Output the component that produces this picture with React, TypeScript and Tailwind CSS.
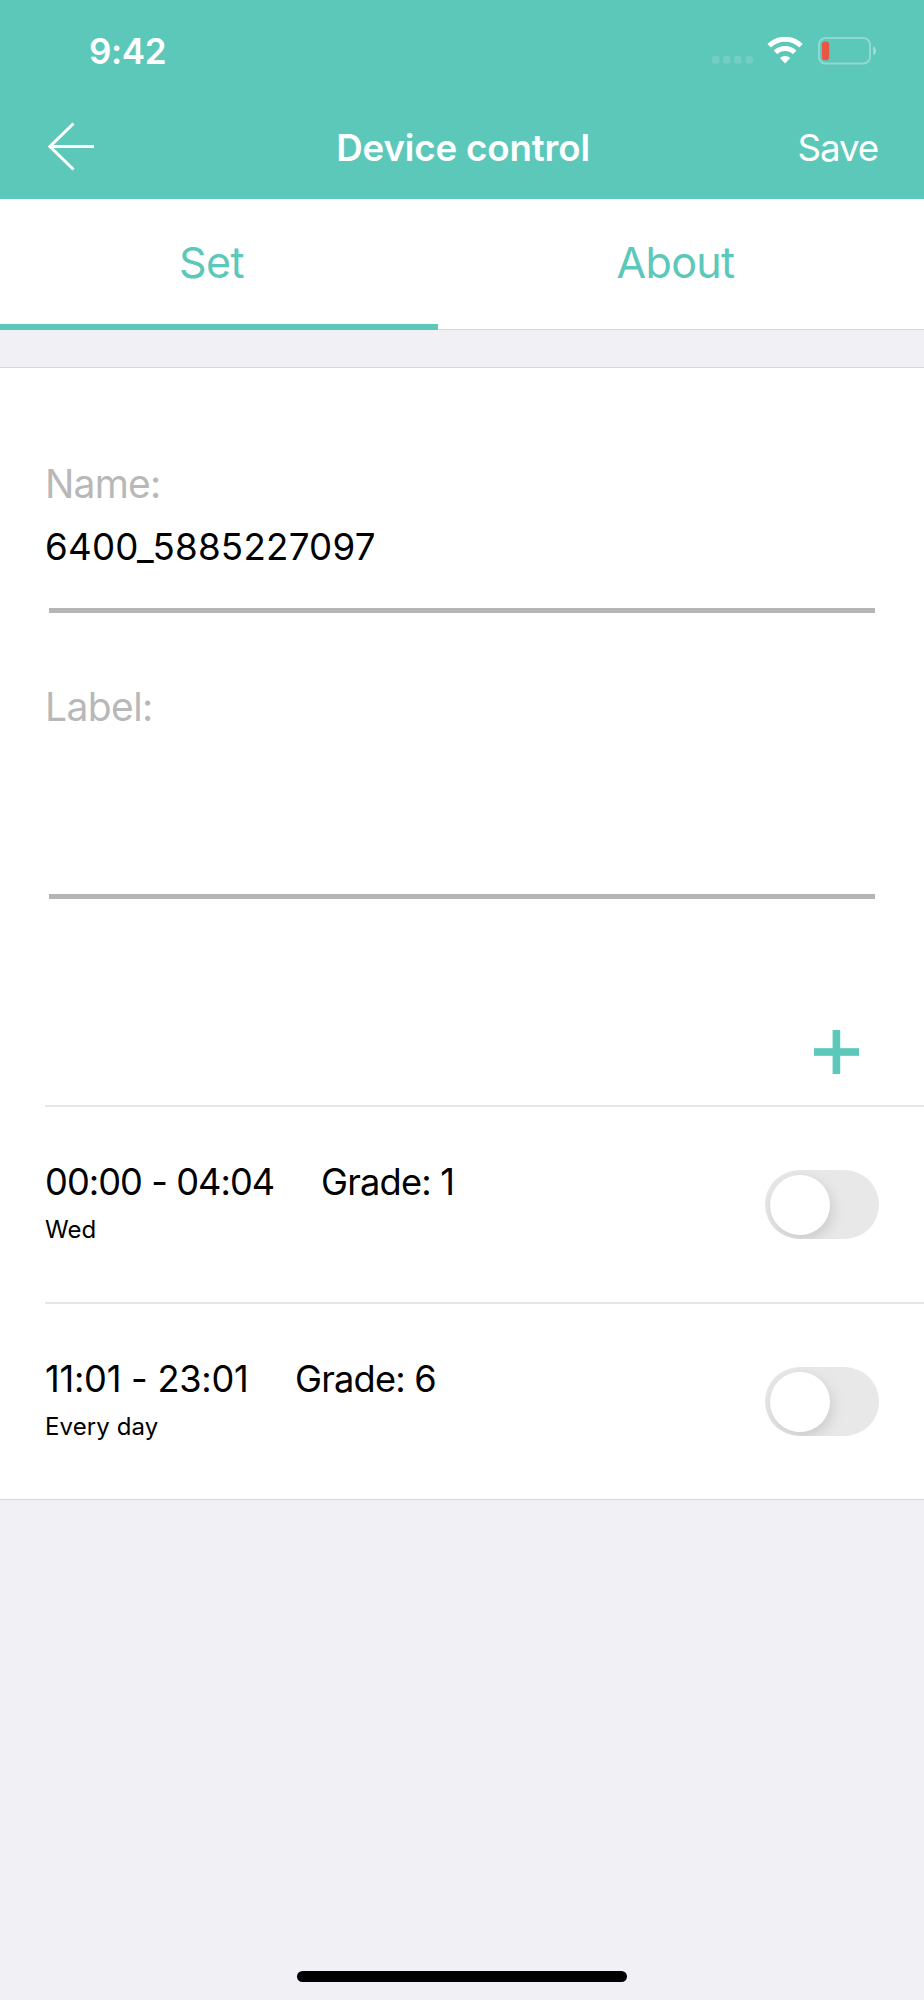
import * as React from "react";

type Schedule = {
  id: number;
  time: string;
  grade: string;
  days: string;
  timeClass: string;
  daysClass: string;
};

const SCHEDULES: Schedule[] = [
  {
    id: 1,
    time: "00:00 - 04:04",
    grade: "Grade: 1",
    days: "Wed",
    timeClass: "w-[276px] tracking-[-0.95px]",
    daysClass: "tracking-[0px]",
  },
  {
    id: 2,
    time: "11:01 - 23:01",
    grade: "Grade: 6",
    days: "Every day",
    timeClass: "w-[250px] tracking-[-0.25px]",
    daysClass: "tracking-[0.1px]",
  },
];

function StatusBar() {
  return (
    <div className="flex h-[98px] items-center justify-between pl-[89px] pr-12 pt-[3px]">
      <span className="pt-px text-[35px] font-semibold leading-none tracking-[-0.4px]">9:42</span>
      <svg width="166" height="28" viewBox="0 0 166 28" fill="none">
        {/* no signal */}
        <g fill="#fff" fillOpacity="0.14">
          <rect x="2" y="19" width="7.4" height="7.4" rx="2" />
          <rect x="13" y="19" width="7.4" height="7.4" rx="2" />
          <rect x="24.2" y="19" width="7.4" height="7.4" rx="2" />
          <rect x="35.4" y="19" width="7.4" height="7.4" rx="2" />
        </g>
        {/* wifi */}
        <g stroke="#fff" strokeWidth="5">
          <path d="M59.2 8.8A22.6 22.6 0 0 1 91 8.8" />
          <path d="M65.5 15.4A13.8 13.8 0 0 1 84.7 15.4" />
        </g>
        <path d="M75.1 26.5L69.9 21.1A7.4 7.4 0 0 1 80.3 21.1Z" fill="#fff" />
        {/* battery */}
        <rect x="109" y="1" width="51" height="25.4" rx="6.5" stroke="#fff" strokeOpacity="0.32" strokeWidth="2" />
        <rect x="112" y="4.4" width="7.2" height="18.8" rx="3.2" fill="#eb5545" />
        <path d="M163.2 9.2a5 5 0 0 1 0 9z" fill="#fff" fillOpacity="0.4" />
      </svg>
    </div>
  );
}

function NavBar() {
  return (
    <div className="grid h-[98px] grid-cols-[1fr_auto_1fr] items-center pl-12 pr-[46px]">
      <button aria-label="Back" className="justify-self-start">
        <svg width="48" height="50" viewBox="0 0 48 50" fill="none" stroke="#fff" strokeWidth="3" className="block">
          <path d="M46 24.5H2M25.5 1.5L2 24.5L25.5 47.5" />
        </svg>
      </button>
      <h1 className="pt-0.5 text-[36.7px] font-semibold leading-none tracking-[-0.15px]">Device control</h1>
      <button className="justify-self-end pt-0.5 text-[36.7px] leading-none tracking-[-1.1px]">Save</button>
    </div>
  );
}

function Tabs() {
  return (
    <div className="relative flex h-[131px] border-b border-[#d6d5da] bg-white pb-1 text-[43px] text-[#5cc8ba]">
      <button className="w-[423px] tracking-[-0.5px]">Set</button>
      <button className="flex-1 pl-1 tracking-[-0.7px]">About</button>
      <span className="absolute -bottom-px left-0 h-1.5 w-[438px] bg-[#5cc8ba]" />
    </div>
  );
}

function Toggle() {
  const [on, setOn] = React.useState(false);
  return (
    <button
      role="switch"
      aria-checked={on}
      onClick={() => setOn(!on)}
      className={`flex h-[69px] w-[114px] items-center overflow-hidden rounded-full px-[5px] ${on ? "justify-end bg-[#5cc8ba]" : "bg-[#e8e8e8]"}`}
    >
      <span className="size-[60px] rounded-full bg-white shadow-[2px_5px_14px_rgba(0,0,0,0.13)]" />
    </button>
  );
}

function ScheduleRow({ item }: { item: Schedule }) {
  return (
    <li className="ml-[45px] flex h-[197px] items-center justify-between border-t-2 border-[#e6e6e6] pr-[45px]">
      <div className="pb-1">
        <div className="flex text-[36.2px] leading-[44px]">
          <span className={item.timeClass}>{item.time}</span>
          <span className="tracking-[-0.8px]">{item.grade}</span>
        </div>
        <p className={`mt-[11px] text-[24px] leading-[30px] ${item.daysClass}`}>{item.days}</p>
      </div>
      <Toggle />
    </li>
  );
}

export default function App() {
  return (
    <div className="flex h-[2000px] w-[924px] flex-col bg-[#f1f0f5] font-['Inter',sans-serif] text-black">
      <header className="h-[199px] bg-[#5cc8ba] text-white">
        <StatusBar />
        <NavBar />
      </header>
      <Tabs />

      <main className="mt-[37px] border-y border-[#d6d5da] bg-white">
        <section className="px-[45px] pt-24">
          <p className="text-[39px] leading-10 tracking-[-0.8px] text-[#b8b8b8]">Name:</p>
          <p className="mt-[21px] text-[36.7px] leading-[44px] tracking-[0.25px]">6400_5885227097</p>
          <div className="mx-1 mt-[39px] h-[4.5px] bg-[#b5b5b5]" />
          <p className="mt-[74.5px] text-[39px] leading-10 tracking-[-0.6px] text-[#b8b8b8]">Label:</p>
          <div className="mx-1 mt-[167px] h-[5px] bg-[#b5b5b5]" />
        </section>

        <div className="flex h-[206px] items-end justify-end pb-[31px] pr-[65px]">
          <button aria-label="Add schedule">
            <svg width="45" height="44" viewBox="0 0 45 44" fill="#5cc8ba" className="block">
              <rect x="0" y="18.2" width="45" height="7.6" />
              <rect x="18.6" y="0" width="7.6" height="44" />
            </svg>
          </button>
        </div>

        <ul>
          {SCHEDULES.map((item) => (
            <ScheduleRow key={item.id} item={item} />
          ))}
        </ul>
      </main>

      <div className="mx-auto mb-[18px] mt-auto h-[11px] w-[330px] rounded-full bg-black" />
    </div>
  );
}
